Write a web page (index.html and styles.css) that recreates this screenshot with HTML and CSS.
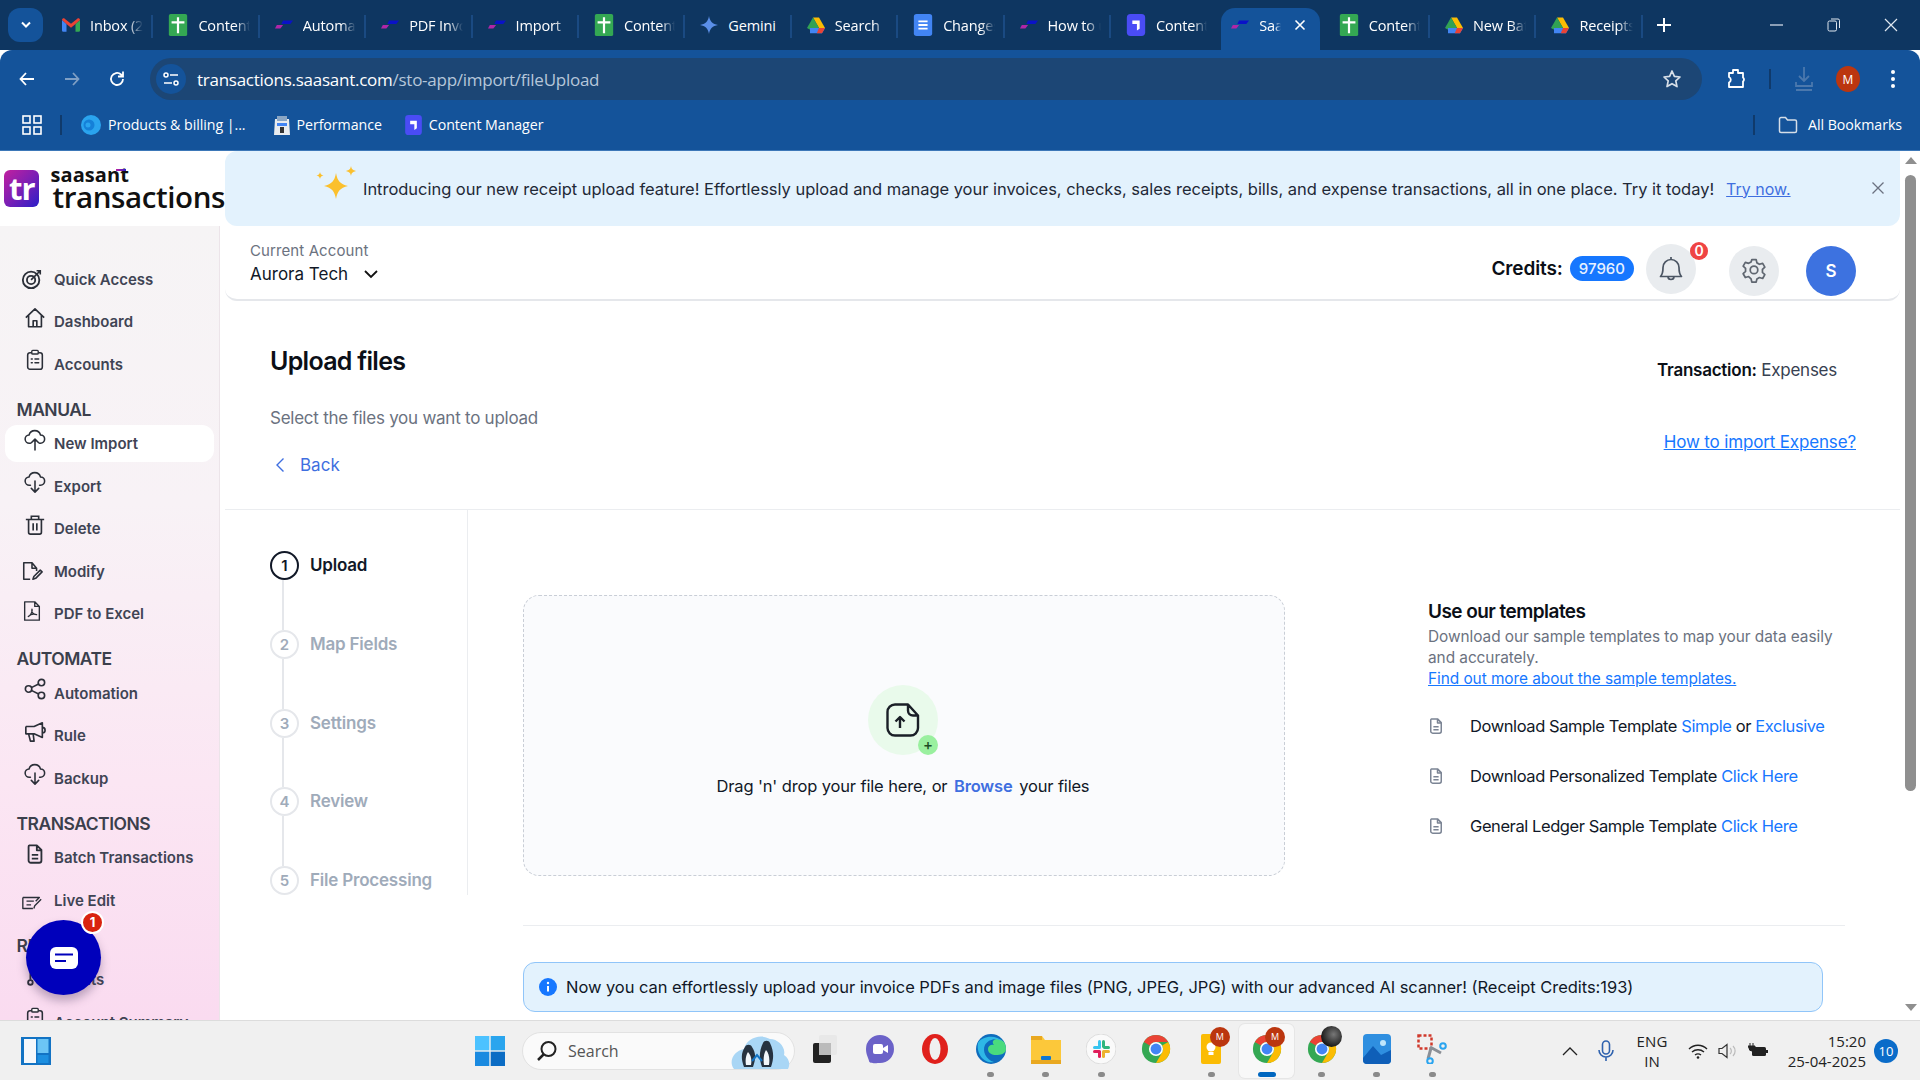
FILE: index.html
```html
<!DOCTYPE html>
<html lang="en">
<head>
<meta charset="utf-8">
<title>SaasAnt Transactions</title>
<link rel="stylesheet" href="styles.css">
</head>
<body>
<svg class="defs" width="0" height="0" aria-hidden="true">
  <defs>
    <symbol id="sheets" viewBox="0 0 20 24"><path d="M2 0h16a2 2 0 0 1 2 2v20a2 2 0 0 1-2 2H2a2 2 0 0 1-2-2V2a2 2 0 0 1 2-2z" fill="#34a853"/><path d="M8.800 3.500h2.400V8H17v2.400h-5.800V21H8.800V10.400H3V8h5.800z" fill="#fff"/></symbol>
    <symbol id="saas" viewBox="0 0 20 12"><path d="M9 1h11l-3 4H7z" fill="#0a12c8"/><path d="M2 6h7l-3 4H0z" fill="#b026a8"/></symbol>
    <symbol id="drive" viewBox="0 0 24 22"><path d="M8 1h8l8 14h-8z" fill="#fbbc04"/><path d="M8 1l8 14-4 6.500L0 15z" fill="#34a853" opacity=".95"/><path d="M4 15h20l-4 7H4z" fill="#4285f4"/><path d="M16 15h8l-4 7h-7z" fill="#ea4335"/></symbol>
    <symbol id="cm" viewBox="0 0 20 24"><rect width="20" height="24" rx="4" fill="#4a4cf5"/><path d="M6 7h8v9l-3 2v-7H6z" fill="#fff"/></symbol>
    <symbol id="chrome" viewBox="0 0 32 32"><circle cx="16" cy="16" r="15" fill="#34a853"/><path d="M16 1a15 15 0 0 1 13 7.500H16a7.500 7.500 0 0 0-6.500 3.750L3 8.500A15 15 0 0 1 16 1z" fill="#ea4335"/><path d="M29 8.500A15 15 0 0 1 16 31l6.500-11.250A7.500 7.500 0 0 0 22.500 12.250z" fill="#fbbc04"/><circle cx="16" cy="16" r="7.500" fill="#fff"/><circle cx="16" cy="16" r="5.800" fill="#4285f4"/></symbol>
    <symbol id="doc" viewBox="0 0 24 24"><path d="M6 2.500h8l5 5V19a2.500 2.500 0 0 1-2.500 2.500h-9A2.500 2.500 0 0 1 5 19V4a1.500 1.500 0 0 1 1-1.500zM14 2.500V8h5M8.500 13h7M8.500 17h7" fill="none" stroke="currentColor" stroke-width="2" stroke-linejoin="round"/></symbol>
    <symbol id="cloud-up" viewBox="0 0 24 24"><path d="M7 15.500H6a4.500 4.500 0 0 1-.5-9A6.500 6.500 0 0 1 18 6.500a4.500 4.500 0 0 1 0 9h-1M12 23V11M8 15l4-4 4 4" fill="none" stroke="currentColor" stroke-width="1.700" stroke-linecap="round" stroke-linejoin="round"/></symbol>
    <symbol id="cloud-down" viewBox="0 0 24 24"><path d="M7 15.500H6a4.500 4.500 0 0 1-.5-9A6.500 6.500 0 0 1 18 6.500a4.500 4.500 0 0 1 0 9h-1M12 11v12M8 19l4 4 4-4" fill="none" stroke="currentColor" stroke-width="1.700" stroke-linecap="round" stroke-linejoin="round"/></symbol>
    <symbol id="clip" viewBox="0 0 24 24"><rect x="4" y="4" width="16" height="18" rx="2.500" fill="none" stroke="currentColor" stroke-width="1.700"/><rect x="8.500" y="1.500" width="7" height="4" rx="1" fill="#f7f4f5" stroke="currentColor" stroke-width="1.500"/><path d="M8 11h1M12 11h4M8 15h1M12 15h4" stroke="currentColor" stroke-width="1.700" stroke-linecap="round"/></symbol>
  </defs>
</svg>

<div class="browser">
  <header class="tabstrip">
    <div class="tablist-btn"><svg width="12" height="8" viewBox="0 0 12 8"><path d="M2 1.500l4 4 4-4" fill="none" stroke="#fff" stroke-width="2"/></svg></div>
    <div class="tabs">
      <div class="tab"><svg class="fav" viewBox="0 0 20 16"><path d="M0 2.500V14a1.500 1.500 0 0 0 1.500 1.500H5V7z" fill="#4285f4"/><path d="M15 7v8.500h3.500A1.500 1.500 0 0 0 20 14V2.500z" fill="#34a853"/><path d="M0 2.500C0 .8 2 0 3 1l7 5.500L17 1c1-1 3-.2 3 1.500L15 7l-5 4-5-4z" fill="#ea4335"/></svg><span class="tab-title">Inbox (2)</span></div>
      <div class="tab"><svg class="fav tall"><use href="#sheets"/></svg><span class="tab-title">Content</span></div>
      <div class="tab"><svg class="fav"><use href="#saas"/></svg><span class="tab-title">Automation</span></div>
      <div class="tab"><svg class="fav"><use href="#saas"/></svg><span class="tab-title">PDF Invoice</span></div>
      <div class="tab"><svg class="fav"><use href="#saas"/></svg><span class="tab-title">Import</span></div>
      <div class="tab"><svg class="fav tall"><use href="#sheets"/></svg><span class="tab-title">Content</span></div>
      <div class="tab"><svg class="fav" viewBox="0 0 20 20"><path d="M10 0c1 6 4 9 10 10-6 1-9 4-10 10-1-6-4-9-10-10 6-1 9-4 10-10z" fill="#5b8fe8"/></svg><span class="tab-title plain">Gemini</span></div>
      <div class="tab"><svg class="fav"><use href="#drive"/></svg><span class="tab-title">Search</span></div>
      <div class="tab"><svg class="fav tall" viewBox="0 0 20 24"><rect width="20" height="24" rx="3" fill="#4285f4"/><path d="M5 8h10M5 12h10M5 16h10" stroke="#fff" stroke-width="2"/></svg><span class="tab-title">Changes</span></div>
      <div class="tab"><svg class="fav"><use href="#saas"/></svg><span class="tab-title">How to use</span></div>
      <div class="tab"><svg class="fav tall"><use href="#cm"/></svg><span class="tab-title">Content</span></div>
      <div class="tab active"><svg class="fav"><use href="#saas"/></svg><span class="tab-title short">SaasAnt</span><svg class="tab-x" width="12" height="12" viewBox="0 0 12 12"><path d="M1.500 1.500l9 9M10.500 1.500l-9 9" stroke="#fff" stroke-width="1.600"/></svg></div>
      <div class="tab"><svg class="fav tall"><use href="#sheets"/></svg><span class="tab-title">Content</span></div>
      <div class="tab"><svg class="fav"><use href="#drive"/></svg><span class="tab-title">New Batch</span></div>
      <div class="tab"><svg class="fav"><use href="#drive"/></svg><span class="tab-title">Receipts</span></div>
    </div>
    <svg class="newtab" width="14" height="14" viewBox="0 0 14 14"><path d="M7 0v14M0 7h14" stroke="#fff" stroke-width="2"/></svg>
    <div class="winctl">
      <svg width="14" height="14" viewBox="0 0 14 14"><path d="M0 7h13" stroke="#dfe7f0" stroke-width="1.200"/></svg>
      <svg width="14" height="14" viewBox="0 0 14 14"><rect x="1" y="3" width="8.500" height="10" rx="1.500" fill="none" stroke="#dfe7f0"/><path d="M4 1h7a1.500 1.500 0 0 1 1.500 1.500V10" fill="none" stroke="#dfe7f0"/></svg>
      <svg width="14" height="14" viewBox="0 0 14 14"><path d="M1 1l12 12M13 1L1 13" stroke="#dfe7f0" stroke-width="1.200"/></svg>
    </div>
  </header>

  <div class="toolbar">
    <div class="nav-btns">
      <svg width="18" height="18" viewBox="0 0 18 18"><path d="M16 9H3M8 3L2.500 9 8 15" fill="none" stroke="#fff" stroke-width="1.800"/></svg>
      <svg width="18" height="18" viewBox="0 0 18 18"><path d="M2 9h13M10 3l5.500 6L10 15" fill="none" stroke="#7f9fc4" stroke-width="1.800"/></svg>
      <svg width="18" height="18" viewBox="0 0 18 18"><path d="M15 9a6 6 0 1 1-2-4.500L15 6.500M15 1.500v5h-5" fill="none" stroke="#fff" stroke-width="1.800"/></svg>
    </div>
    <div class="omnibox">
      <div class="siteinfo"><svg width="16" height="16" viewBox="0 0 16 16"><path d="M7 4h8M1 12h8" stroke="#fff" stroke-width="1.500"/><circle cx="3" cy="4" r="2" fill="none" stroke="#fff" stroke-width="1.500"/><circle cx="13" cy="12" r="2" fill="none" stroke="#fff" stroke-width="1.500"/></svg></div>
      <span class="url">transactions.saasant.com<span class="url-path">/sto-app/import/fileUpload</span></span>
      <svg class="star" width="20" height="20" viewBox="0 0 20 20"><path d="M10 2l2.400 5.400 5.600.6-4.200 3.900 1.200 5.700L10 14.700l-5 2.900 1.200-5.700L2 8l5.600-.6z" fill="none" stroke="#d7dfe8" stroke-width="1.700" stroke-linejoin="round"/></svg>
    </div>
    <div class="tool-right">
      <svg width="20" height="22" viewBox="0 0 20 22"><path d="M3 5h4V2h5v3h5v4.500a2.500 2.500 0 0 1 0 4V19H3v-4.500a3 3 0 0 0 0-5.500z" fill="none" stroke="#fff" stroke-width="1.800" stroke-linejoin="round"/></svg>
      <span class="tool-sep"></span>
      <svg width="20" height="26" viewBox="0 0 20 26"><path d="M10 1v13M5 10l5 5 5-5M2 16v4h16v-4M2 24h16" fill="none" stroke="#4b78ad" stroke-width="1.800"/></svg>
      <span class="avatar-m">M</span>
      <svg width="4" height="18" viewBox="0 0 4 18"><circle cx="2" cy="2" r="2" fill="#fff"/><circle cx="2" cy="9" r="2" fill="#fff"/><circle cx="2" cy="16" r="2" fill="#fff"/></svg>
    </div>
  </div>

  <div class="bookmarks">
    <svg class="apps" width="20" height="20" viewBox="0 0 20 20"><g fill="none" stroke="#fff" stroke-width="1.600"><rect x="1" y="1" width="7" height="7"/><rect x="12" y="1" width="7" height="7"/><rect x="1" y="12" width="7" height="7"/><rect x="12" y="12" width="7" height="7"/></g></svg>
    <span class="bm-sep"></span>
    <div class="bm"><svg width="20" height="20" viewBox="0 0 20 20"><circle cx="10" cy="10" r="10" fill="#2aa4ef"/><circle cx="8" cy="10" r="5.500" fill="#1580d8"/><circle cx="7" cy="10" r="2.500" fill="#2aa4ef"/></svg><span>Products &amp; billing |...</span></div>
    <div class="bm"><svg width="16" height="20" viewBox="0 0 16 20"><path d="M1 4h14l1 16H0z" fill="#e9ecef"/><rect x="3" y="1" width="10" height="5" fill="#8ba6c4"/><path d="M3 8h10v3H3z" fill="#4285f4"/><path d="M6 12h4v6H6z" fill="#333"/></svg><span>Performance</span></div>
    <div class="bm"><svg width="17" height="20"><use href="#cm"/></svg><span>Content Manager</span></div>
    <div class="bm-all">
      <span class="bm-sep"></span>
      <svg width="20" height="18" viewBox="0 0 20 18"><path d="M1.500 3a1.500 1.500 0 0 1 1.500-1.500h4.500l2 2.500H17a1.500 1.500 0 0 1 1.500 1.500V15a1.500 1.500 0 0 1-1.500 1.500H3A1.500 1.500 0 0 1 1.500 15z" fill="none" stroke="#d5dee8" stroke-width="1.500"/></svg>
      <span>All Bookmarks</span>
    </div>
  </div>

  <div class="page">
    <aside class="side">
      <div class="logo">
        <div class="logo-mark">tr</div>
        <div class="logo-text"><span class="logo-top">saasant</span><span class="logo-main">transactions</span></div>
      </div>
      <nav class="nav">
        <a class="nav-item"><svg class="nav-ic flat" viewBox="0 0 24 24"><g fill="none" stroke="currentColor" stroke-width="2"><circle cx="11" cy="13" r="9"/><circle cx="11" cy="13" r="4.500"/><path d="M11 13L21 3M17 3h4v4" stroke-width="1.800"/></g></svg><span>Quick Access</span></a>
        <a class="nav-item"><svg class="nav-ic" viewBox="0 0 24 24"><path d="M2 11.500L12 2l10 9.500M5 9v12.500h14V9M10 21.500V15h4v6.500" fill="none" stroke="currentColor" stroke-width="1.800" stroke-linejoin="round"/></svg><span>Dashboard</span></a>
        <a class="nav-item"><svg class="nav-ic"><use href="#clip"/></svg><span>Accounts</span></a>
        <h3 class="nav-head">MANUAL</h3>
        <a class="nav-item current"><svg class="nav-ic"><use href="#cloud-up"/></svg><span>New Import</span></a>
        <a class="nav-item"><svg class="nav-ic"><use href="#cloud-down"/></svg><span>Export</span></a>
        <a class="nav-item"><svg class="nav-ic" viewBox="0 0 24 24"><path d="M2 6h20M8 6V2.500h8V6M5 6v14a2 2 0 0 0 2 2h10a2 2 0 0 0 2-2V6M10 10v8M14 10v8" fill="none" stroke="currentColor" stroke-width="1.800"/></svg><span>Delete</span></a>
        <a class="nav-item"><svg class="nav-ic flat" viewBox="0 0 24 24"><path d="M10 21H3V3h9l5 6v3M12 3v6h5M13 21l1-3 7-7 2 2-7 7z" fill="none" stroke="currentColor" stroke-width="1.700" stroke-linejoin="round"/></svg><span>Modify</span></a>
        <a class="nav-item"><svg class="nav-ic pdf" viewBox="0 0 24 24"><path d="M4 2h11l5 5v15H4zM15 2v5h5M8 18c2-1 5-5 4-8-1 3 1 6 5 6-3-1-7 0-9 2z" fill="none" stroke="currentColor" stroke-width="1.500" stroke-linejoin="round"/></svg><span>PDF to Excel</span></a>
        <h3 class="nav-head">AUTOMATE</h3>
        <a class="nav-item"><svg class="nav-ic" viewBox="0 0 24 24"><g fill="none" stroke="currentColor" stroke-width="1.800"><circle cx="5" cy="12" r="3.500"/><circle cx="19" cy="5" r="3.500"/><circle cx="19" cy="19" r="3.500"/><path d="M8 10.500l8-4M8 13.500l8 4"/></g></svg><span>Automation</span></a>
        <a class="nav-item"><svg class="nav-ic" viewBox="0 0 24 24"><path d="M2 6h9l9-4v16l-9-4H7M2 6v8h5M5 14l2 8h4l-1-8M20 7a3 3 0 0 1 0 6" fill="none" stroke="currentColor" stroke-width="1.800" stroke-linejoin="round"/></svg><span>Rule</span></a>
        <a class="nav-item"><svg class="nav-ic"><use href="#cloud-down"/></svg><span>Backup</span></a>
        <h3 class="nav-head">TRANSACTIONS</h3>
        <a class="nav-item"><svg class="nav-ic"><use href="#doc"/></svg><span>Batch Transactions</span></a>
        <a class="nav-item"><svg class="nav-ic low" viewBox="0 0 24 24"><path d="M2 6h18l-4 4M2 6v12h11M6 10h8M6 14h5M14 18l1-3 7-7" fill="none" stroke="currentColor" stroke-width="1.500" stroke-linejoin="round"/></svg><span>Live Edit</span></a>
        <h3 class="nav-head">REPORTS</h3>
        <a class="nav-item"><svg class="nav-ic" viewBox="0 0 24 24"><path d="M7 2v14M17 2v6" fill="none" stroke="currentColor" stroke-width="2"/><circle cx="7" cy="19" r="2.500" fill="none" stroke="currentColor" stroke-width="2"/></svg><span>Clients</span></a>
        <a class="nav-item"><svg class="nav-ic"><use href="#clip"/></svg><span>Account Summary</span></a>
      </nav>
      <div class="chat">
        <svg width="28" height="22" viewBox="0 0 28 22"><rect width="28" height="22" rx="6" fill="#fff"/><path d="M5 7.500h18M5 14h11" stroke="#0000bb" stroke-width="2.200"/></svg>
        <span class="chat-badge">1</span>
      </div>
    </aside>

    <main class="main">
      <div class="banner">
        <svg class="sparkle" width="44" height="42" viewBox="0 0 44 42"><path d="M21 8c1.500 8 4 11 12 13-8 2-10.500 5-12 13-1.500-8-4-11-12-13 8-2 10.500-5 12-13z" fill="#fbc02d"/><path d="M36 1c.600 3 1.500 4 5 5-3.500 1-4.400 2-5 5-.600-3-1.500-4-5-5 3.500-1 4.400-2 5-5zM5 7c.400 2 1 3 3.500 3.500C6 11 5.400 12 5 14c-.400-2-1-3-3.500-3.500C4 10 4.600 9 5 7z" fill="#fbc02d"/></svg>
        <p class="banner-text">Introducing our new receipt upload feature! Effortlessly upload and manage your invoices, checks, sales receipts, bills, and expense transactions, all in one place. Try it today!</p>
        <a class="banner-link">Try now.</a>
        <svg class="banner-x" width="12" height="12" viewBox="0 0 12 12"><path d="M.5.500l11 11M11.500.500l-11 11" stroke="#6b7280" stroke-width="1.300"/></svg>
      </div>

      <div class="topbar">
        <div class="account">
          <span class="account-label">Current Account</span>
          <span class="account-name">Aurora Tech <svg width="14" height="9" viewBox="0 0 14 9"><path d="M1 1l6 6 6-6" fill="none" stroke="#111" stroke-width="1.800"/></svg></span>
        </div>
        <div class="top-right">
          <strong class="credits">Credits:</strong>
          <span class="credit-pill">97960</span>
          <div class="round bell">
            <svg width="24" height="26" viewBox="0 0 24 26"><path d="M1.500 20.500c2-2 2.500-4 2.500-9a8 8 0 0 1 16 0c0 5 .500 7 2.500 9zM12 1v2.500M9 20.500a3 3 0 0 0 6 0" fill="none" stroke="#4b5563" stroke-width="1.700" stroke-linejoin="round"/></svg>
            <span class="bell-badge">0</span>
          </div>
          <div class="round gear">
            <svg width="26" height="26" viewBox="0 0 24 24"><path d="M10 1.500h4l.700 3 2.300 1.300 3-.900 2 3.500-2.200 2.100v2.800l2.200 2.100-2 3.500-3-.900-2.300 1.300-.700 3h-4l-.700-3L7 17.100l-3 .900-2-3.500 2.200-2.100V9.600L2 7.500 4 4l3 .900 2.300-1.300z" fill="none" stroke="#5f6670" stroke-width="1.600" stroke-linejoin="round"/><circle cx="12" cy="11" r="3.500" fill="none" stroke="#5f6670" stroke-width="1.600"/></svg>
          </div>
          <div class="round user">S</div>
        </div>
      </div>

      <section class="title-row">
        <div>
          <h1 class="title">Upload files</h1>
          <p class="subtitle">Select the files you want to upload</p>
          <a class="back"><svg width="10" height="16" viewBox="0 0 10 16"><path d="M8.500 1.500L2 8l6.500 6.500" fill="none" stroke="#3f6fe0" stroke-width="1.400"/></svg><span>Back</span></a>
        </div>
        <div class="title-right">
          <p class="txn"><b>Transaction:</b> Expenses</p>
          <a class="howto">How to import Expense?</a>
        </div>
      </section>

      <section class="work">
        <ol class="steps">
          <li class="step on"><div class="marker"><span class="num">1</span><span class="rail"></span></div><span class="step-name">Upload</span></li>
          <li class="step"><div class="marker"><span class="num">2</span><span class="rail"></span></div><span class="step-name">Map Fields</span></li>
          <li class="step"><div class="marker"><span class="num">3</span><span class="rail"></span></div><span class="step-name">Settings</span></li>
          <li class="step"><div class="marker"><span class="num">4</span><span class="rail"></span></div><span class="step-name">Review</span></li>
          <li class="step last"><div class="marker"><span class="num">5</span></div><span class="step-name">File Processing</span></li>
        </ol>
        <div class="work-main">
          <div class="work-row">
            <div class="drop">
              <div class="drop-icon">
                <svg width="36" height="36" viewBox="0 0 36 36"><path d="M10 2.500h13l10 11V26a7.500 7.500 0 0 1-7.500 7.500H10A7.500 7.500 0 0 1 2.500 26V10A7.500 7.500 0 0 1 10 2.500zM23 2.500V8.500a5 5 0 0 0 5 5h5M15 26V15M10.500 19.500L15 15l4.500 4.500" fill="none" stroke="#1a1f27" stroke-width="2.400" stroke-linejoin="round"/></svg>
                <span class="drop-plus">+</span>
              </div>
              <p class="drop-text">Drag 'n' drop your file here, or <b>Browse</b> your files</p>
            </div>
            <div class="tpl">
              <h2 class="tpl-title">Use our templates</h2>
              <p class="tpl-desc">Download our sample templates to map your data easily and accurately.<br><a>Find out more about the sample templates.</a></p>
              <ul class="tpl-list">
                <li><svg class="tpl-ic"><use href="#doc"/></svg><span>Download Sample Template <a>Simple</a> or <a>Exclusive</a></span></li>
                <li><svg class="tpl-ic"><use href="#doc"/></svg><span>Download Personalized Template <a>Click Here</a></span></li>
                <li><svg class="tpl-ic"><use href="#doc"/></svg><span>General Ledger Sample Template <a>Click Here</a></span></li>
              </ul>
            </div>
          </div>
          <hr class="rule">
          <div class="notice">
            <svg width="18" height="18" viewBox="0 0 18 18"><circle cx="9" cy="9" r="9" fill="#1677ff"/><path d="M9 8v5.500" stroke="#fff" stroke-width="2"/><circle cx="9" cy="5" r="1.200" fill="#fff"/></svg>
            <span>Now you can effortlessly upload your invoice PDFs and image files (PNG, JPEG, JPG) with our advanced AI scanner! (Receipt Credits:193)</span>
          </div>
        </div>
      </section>
    </main>

    <div class="scrollbar">
      <span class="sb-up"></span>
      <span class="sb-thumb"></span>
      <span class="sb-down"></span>
    </div>
  </div>

  <footer class="taskbar">
    <svg class="widgets" width="30" height="28" viewBox="0 0 30 28"><rect width="30" height="28" fill="#1273c4"/><rect x="3" y="2" width="12" height="24" fill="#f5f8fb"/><rect x="16.500" y="2" width="11" height="14" fill="#6cc5f5"/><rect x="16.500" y="18" width="11" height="8" fill="#1c8fe0"/></svg>
    <div class="tb-center">
      <svg class="winlogo" width="30" height="30" viewBox="0 0 30 30"><rect width="14.300" height="14.300" fill="#4cc2ff"/><rect x="15.700" width="14.300" height="14.300" fill="#2aa5ee"/><rect y="15.700" width="14.300" height="14.300" fill="#1a8ae0"/><rect x="15.700" y="15.700" width="14.300" height="14.300" fill="#0b6cc4"/></svg>
      <div class="search">
        <svg width="22" height="22" viewBox="0 0 22 22"><circle cx="12.500" cy="9" r="7" fill="none" stroke="#222" stroke-width="2"/><path d="M8 14l-6 6" stroke="#222" stroke-width="2.500"/></svg>
        <span>Search</span>
        <svg class="penguins" width="60" height="36" viewBox="0 0 60 36"><path d="M4 36c-6-8 0-18 10-20C16 6 30 0 40 6c8 0 16 8 14 16 6 4 6 10 4 14z" fill="#a9d6f5"/><path d="M14 34c-3-8-3-14 1-20 1-3 6-3 7 0 4 6 4 12 1 20z" fill="#263240"/><path d="M32 34c-3-8-3-16 1-24 1-3 6-3 7 0 4 8 4 16 1 24z" fill="#263240"/><path d="M16 32c-1-5 0-10 2-13 3 3 4 8 3 13zM34 32c-1-6 0-12 2-15 3 3 4 9 3 15z" fill="#f2f6fa"/><path d="M22 28l5-6 5 6" fill="none" stroke="#1273c4" stroke-width="2"/></svg>
      </div>
      <div class="apps-row">
        <div class="app"><svg width="24" height="28" viewBox="0 0 24 28"><rect x="6" y="0" width="18" height="20" rx="2" fill="#e8e8e8"/><rect y="8" width="18" height="20" rx="2" fill="#222"/><rect x="6" y="8" width="12" height="12" fill="#bbb"/></svg></div>
        <div class="app"><svg width="30" height="30" viewBox="0 0 30 30"><path d="M15 1a14 14 0 0 1 0 28c-3 0-11 1-11-2 0-2-3-6-3-12A14 14 0 0 1 15 1z" fill="#6b62c8"/><rect x="8" y="10" width="10" height="10" rx="2" fill="#fff"/><path d="M18 14l5-3v8l-5-3z" fill="#fff"/></svg></div>
        <div class="app"><svg width="30" height="32" viewBox="0 0 30 32"><ellipse cx="15" cy="16" rx="13" ry="15" fill="#e0201c"/><ellipse cx="15" cy="16" rx="5.500" ry="11" fill="#f0f0f0"/></svg></div>
        <div class="app dot"><svg width="30" height="30" viewBox="0 0 30 30"><circle cx="15" cy="15" r="15" fill="#0f6cbd"/><path d="M30 15c0 5-6 6-10 6s-8-2-8-6c0-3 3-5 6-4-6-7 12-10 12 4z" fill="#4adb7d"/><path d="M2 9C6 2 20 0 27 8c-6-5-15-3-18 3-3 6 1 15 9 17-9 2-18-7-16-19z" fill="#2eb8e6"/></svg></div>
        <div class="app dot"><svg width="32" height="32" viewBox="0 0 32 32"><path d="M1 3h11l3 4h16v24H1z" fill="#fcc83a"/><rect x="1" y="3" width="11" height="4" fill="#e9a820"/><rect x="11" y="23" width="10" height="4" rx="1" fill="#0f78d4"/><rect x="1" y="27" width="30" height="4" fill="#e9a820"/></svg></div>
        <div class="app dot"><svg width="30" height="30" viewBox="0 0 30 30"><circle cx="15" cy="15" r="15" fill="#fafafa" stroke="#ddd"/><rect x="12" y="6" width="3" height="8" rx="1.500" fill="#36c5f0"/><rect x="7" y="12" width="8" height="3" rx="1.500" fill="#36c5f0"/><rect x="16" y="6" width="3" height="8" rx="1.500" fill="#2eb67d"/><rect x="17" y="12" width="7" height="3" rx="1.500" fill="#2eb67d"/><rect x="7" y="16" width="8" height="3" rx="1.500" fill="#e01e5a"/><rect x="12" y="17" width="3" height="7" rx="1.500" fill="#e01e5a"/><rect x="16" y="16" width="3" height="8" rx="1.500" fill="#ecb22e"/><rect x="17" y="16" width="7" height="3" rx="1.500" fill="#ecb22e"/></svg></div>
        <div class="app"><svg width="30" height="30"><use href="#chrome"/></svg></div>
        <div class="app dot"><svg width="20" height="30" viewBox="0 0 20 30"><rect width="20" height="30" rx="2" fill="#fbbc04"/><circle cx="10" cy="13" r="4.500" fill="#fff"/><rect x="7.500" y="18" width="5" height="3" fill="#fff"/></svg><span class="m-badge">M</span></div>
        <div class="app dot active"><svg width="30" height="30"><use href="#chrome"/></svg><span class="m-badge">M</span></div>
        <div class="app dot"><svg width="30" height="30"><use href="#chrome"/></svg><span class="photo-badge"></span></div>
        <div class="app dot"><svg width="28" height="30" viewBox="0 0 28 30"><rect width="28" height="30" rx="4" fill="#2f8fe0"/><circle cx="20" cy="9" r="3" fill="#bfe6fb"/><path d="M0 24l10-12 8 9 10-5v10a4 4 0 0 1-4 4H4a4 4 0 0 1-4-4z" fill="#0f5fb8"/></svg></div>
        <div class="app dot"><svg width="30" height="30" viewBox="0 0 30 30"><rect x="1.500" y="1.500" width="13" height="13" fill="none" stroke="#d0392b" stroke-width="2.500" stroke-dasharray="3 2"/><path d="M13 13l11 6M14 14l-3 11" stroke="#8a8f96" stroke-width="3"/><circle cx="26" cy="12" r="2.800" fill="none" stroke="#2aa4ef" stroke-width="2"/><circle cx="13" cy="27" r="2.800" fill="none" stroke="#2aa4ef" stroke-width="2"/></svg></div>
      </div>
    </div>
    <div class="tray">
      <svg width="16" height="10" viewBox="0 0 16 10"><path d="M1 9l7-7 7 7" fill="none" stroke="#222" stroke-width="1.300"/></svg>
      <svg width="16" height="22" viewBox="0 0 16 22"><rect x="4.500" y="1" width="7" height="13" rx="3.500" fill="none" stroke="#2f62ae" stroke-width="1.600"/><path d="M1 10a7 7 0 0 0 14 0M8 17v4" fill="none" stroke="#2f62ae" stroke-width="1.600"/></svg>
      <div class="lang"><span>ENG</span><span>IN</span></div>
      <svg width="20" height="16" viewBox="0 0 20 16"><path d="M1 6c5-5 13-5 18 0M4 9c3.500-3 8.500-3 12 0M7 12c2-1.500 4-1.500 6 0" fill="none" stroke="#222" stroke-width="1.400"/><circle cx="10" cy="14.500" r="1.300" fill="#222"/></svg>
      <svg width="20" height="16" viewBox="0 0 20 16"><path d="M1 5.500h3L9 1.500v13L4 10.500H1z" fill="none" stroke="#333" stroke-width="1.200"/><path d="M12 5a4 4 0 0 1 0 6M15 3a7 7 0 0 1 0 10" fill="none" stroke="#bbb" stroke-width="1.200"/></svg>
      <svg width="20" height="16" viewBox="0 0 20 16"><rect x="4" y="4" width="14" height="9" rx="1.500" fill="#222"/><rect x="18" y="7" width="2" height="3" fill="#222"/><path d="M2 0v3M5 0v3M0 3h7v2a3 3 0 0 1-6 0z" stroke="#222" fill="#222"/></svg>
      <div class="clock"><span>15:20</span><span>25-04-2025</span></div>
      <span class="notif">10</span>
    </div>
  </footer>
</div>
</body>
</html>
```

FILE: styles.css
```css
* { box-sizing: border-box; }
html, body { margin: 0; height: 100%; overflow: hidden; }
body { font-family: Inter, "Liberation Sans", sans-serif; color: #111827; }
p, h1, h2, h3, ul, ol { margin: 0; padding: 0; list-style: none; }
.defs { display: block; height: 0; }
.browser { width: 1920px; height: 1080px; display: flex; flex-direction: column; }

/* Tab strip */
.tabstrip { height: 50px; background: #0e3661; display: flex; align-items: flex-start; padding: 8px 0 0 8px; flex: none; font-family: "Open Sans", sans-serif; }
.tablist-btn { width: 35px; height: 34px; background: #14539a; border-radius: 12px; display: flex; align-items: center; justify-content: center; margin-right: 4px; }
.tabs { display: flex; }
.tab { width: 106.400px; height: 42px; display: flex; align-items: center; padding: 0 10px 8px 15px; gap: 10px; color: #fff; font-size: 14.500px; letter-spacing: -.15px; position: relative; }
.tab::after { content: ""; position: absolute; right: 0; top: 7px; height: 23px; width: 2px; background: #1a4a82; }
.tab.active { background: #14539a; border-radius: 14px 14px 0 0; margin: 0 4px; width: 98.400px; padding: 0 10px 8px 10px; }
.tab.active::after, .tab:nth-child(11)::after { display: none; }
.fav { width: 18px; height: 18px; flex: none; }
.fav.tall { width: 20px; height: 22px; }
.tab-title { flex: 1; min-width: 0; overflow: hidden; white-space: nowrap; -webkit-mask-image: linear-gradient(90deg, #000 72%, transparent); mask-image: linear-gradient(90deg, #000 72%, transparent); }
.tab-title.plain { -webkit-mask-image: none; mask-image: none; }
.tab-title.short { flex: none; width: 22px; }
.tab-x { margin-left: auto; margin-right: 4px; flex: none; }
.newtab { margin: 10px 0 0 14px; flex: none; }
.winctl { margin-left: auto; display: flex; gap: 43px; padding: 10px 22px 0 0; }

/* Toolbar */
.toolbar { height: 50px; background: #14539a; border-radius: 12px 12px 0 0; display: flex; align-items: center; flex: none; padding: 8px 0 0 18px; }
.nav-btns { display: flex; gap: 27px; width: 132px; }
.omnibox { width: 1552px; height: 42px; background: #1c4675; border-radius: 21px; display: flex; align-items: center; padding: 0 20px 0 6px; }
.siteinfo { width: 30px; height: 30px; background: #14539a; border-radius: 50%; display: flex; align-items: center; justify-content: center; }
.url { margin-left: 11px; color: #fff; font-family: "Open Sans", sans-serif; font-size: 17px; letter-spacing: -.26px; }
.url-path { color: #b6c6da; }
.star { margin-left: auto; }
.tool-right { display: flex; align-items: center; margin-left: 24px; flex: 1; }
.tool-sep { width: 2px; height: 20px; background: #103a6b; margin: 0 23px; }
.avatar-m { width: 24px; height: 26px; background: #bb360f; color: #fff; border-radius: 50%; font: 12px "Open Sans", sans-serif; display: flex; align-items: center; justify-content: center; margin: 0 31px 0 22px; }

/* Bookmarks */
.bookmarks { height: 51px; background: #14539a; display: flex; align-items: center; padding: 0 18px 1px 22px; flex: none; color: #fff; font: 14.200px "Open Sans", sans-serif; letter-spacing: -.05px; border-bottom: 1px solid #3d78b8; }
.apps { flex: none; }
.bm-sep { width: 2px; height: 20px; background: #103a6b; margin: 0 19px 0 18px; flex: none; }
.bm { display: flex; align-items: center; gap: 7px; margin-right: 28px; white-space: nowrap; }
.bm + .bm { margin-right: 23px; }
.bm-all { margin-left: auto; display: flex; align-items: center; gap: 10px; }
.bm-all .bm-sep { margin: 0 13px 0 0; }

/* Page */
.page { height: 869px; display: flex; flex: none; background: #fff; overflow: hidden; }
.side { width: 225px; flex: none; display: flex; flex-direction: column; position: relative; background: #fff; }
.logo { height: 75px; display: flex; align-items: center; padding: 0 0 0 4px; gap: 11px; flex: none; }
.logo-mark { width: 39px; height: 37px; border-radius: 6px; background: linear-gradient(135deg, #c2209f 0%, #7d1fb4 50%, #2a1ec8 100%); color: #fff; font: 700 31px/36px "Open Sans", sans-serif; text-align: center; letter-spacing: -1px; }
.logo-text { display: flex; flex-direction: column; }
.logo-top { font: 700 20px/16px "Open Sans", sans-serif; color: #111; letter-spacing: .1px; position: relative; }
.logo-top::after { content: ""; position: absolute; left: 66px; top: 2px; width: 10px; height: 1.500px; background: linear-gradient(90deg, #c2209f, #2a1ec8); }
.logo-main { font: 600 29.500px/27px "Open Sans", sans-serif; color: #111; letter-spacing: -.4px; margin-left: 2px; white-space: nowrap; }
.nav { width: 220px; flex: 1; background: linear-gradient(180deg, #f6f4f5 0%, #f8f2f6 35%, #fbe6f3 70%, #fadbf0 100%); border-right: 1px solid #ece4e9; padding-top: 32px; overflow: hidden; }
.nav-item { height: 42.500px; display: flex; align-items: center; gap: 8px; color: #3f4454; font-size: 15px; font-weight: 600; white-space: nowrap; margin-left: 5px; margin-right: 5px; padding-left: 19px; border-radius: 12px; }
.nav-item.current { background: #fff; height: 37px; margin-top: 2.750px; margin-bottom: 2.750px; }
.nav-ic { width: 22px; height: 22px; flex: none; color: #2b2f38; margin-bottom: 8px; }
.nav-ic.flat { margin-bottom: 0; margin-left: -3px; margin-right: 3px; }
.nav-ic.pdf { margin-bottom: 5px; margin-left: -3px; margin-right: 3px; }
.nav-ic.low { margin: 6px 3px 0 -3px; }
.nav-head { height: 28px; margin: 9px 0 0 16.500px; font-size: 17.500px; line-height: 29px; font-weight: 600; color: #3b3f4c; letter-spacing: -.5px; }
.chat { position: absolute; left: 26px; top: 769px; width: 75px; height: 75px; background: #0000bb; border-radius: 50%; box-shadow: 0 6px 10px rgba(70, 50, 90, .35); display: flex; align-items: center; justify-content: center; }
.chat-badge { position: absolute; right: -3px; top: -9px; width: 23px; height: 23px; border-radius: 50%; background: #d9230f; border: 2px solid #fff; color: #fff; font: 700 13px/19px Inter, sans-serif; text-align: center; }

.main { flex: 1; min-width: 0; display: flex; flex-direction: column; }
.banner { height: 75px; background: #e3f2fd; border-radius: 12px 0 12px 12px; display: flex; align-items: center; padding: 0 16px 0 90px; flex: none; }
.sparkle { flex: none; margin: -6px 4px 0 0; }
.banner-text { font-size: 16.500px; color: #1f2937; white-space: nowrap; letter-spacing: -.03px; }
.banner-link { margin-left: 12px; font-size: 16px; color: #3f6fe0; text-decoration: underline; white-space: nowrap; }
.banner-x { margin-left: auto; margin-bottom: 2px; }

.topbar { height: 75px; display: flex; justify-content: space-between; align-items: center; padding: 0 44px 0 25px; border-bottom: 2px solid #e5e7eb; border-radius: 0 0 12px 12px; flex: none; }
.account { display: flex; flex-direction: column; gap: 1px; margin-top: 2px; }
.account-label { font-size: 15px; color: #6b7280; line-height: 20px; letter-spacing: .1px; }
.account-name { font-size: 17px; color: #111827; line-height: 24px; display: flex; align-items: center; gap: 16px; white-space: nowrap; }
.top-right { display: flex; align-items: center; margin-top: 16px; }
.credits { font-size: 19px; font-weight: 600; color: #0b0f17; margin-right: 7px; margin-bottom: 5px; letter-spacing: -.1px; }
.credit-pill { background: #1677ff; color: #e8f2ff; font-size: 15px; font-weight: 500; height: 25px; line-height: 25px; padding: 0 9px; border-radius: 13px; margin-bottom: 5px; }
.round { width: 50px; height: 50px; border-radius: 50%; display: flex; align-items: center; justify-content: center; position: relative; }
.bell { background: #e9ecef; margin-left: 12px; margin-bottom: 4px; }
.bell-badge { position: absolute; right: -12px; top: -2px; width: 18px; height: 18px; background: #ef4444; color: #fff; border-radius: 50%; font: 600 14px/18px Inter, sans-serif; text-align: center; }
.gear { background: #e9ecef; margin-left: 33px; }
.user { background: #3d72e0; color: #fff; font-size: 17px; font-weight: 600; margin-left: 27px; }

.title-row { height: 209px; border-bottom: 1px solid #ebedf0; display: flex; justify-content: space-between; padding: 44px 44px 0 45px; flex: none; }
.title { font-size: 25px; line-height: 32px; font-weight: 600; color: #0b0f17; letter-spacing: -.7px; }
.subtitle { margin-top: 29px; font-size: 17px; line-height: 24px; color: #6b7280; letter-spacing: -.25px; }
.back { margin: 23px 0 0 5px; display: flex; align-items: center; gap: 15px; font-size: 17px; line-height: 24px; color: #3f6fe0; }
.title-right { display: flex; flex-direction: column; align-items: flex-end; }
.txn { font-size: 17px; line-height: 24px; margin: 13px 19px 0 0; color: #374151; letter-spacing: -.25px; }
.txn b { font-weight: 600; color: #0b0f17; }
.howto { margin-top: 48px; font-size: 17px; line-height: 24px; color: #1677ff; text-decoration: underline; letter-spacing: -.15px; }

.work { display: flex; flex: 1; min-height: 0; }
.steps { width: 243px; height: 385px; border-right: 1px solid #ebedf0; padding: 41px 0 0 45px; flex: none; }
.step { height: 78.750px; display: flex; gap: 11px; font-size: 17px; font-weight: 600; color: #9fabba; }
.step.last { height: 29px; }
.marker { width: 29px; display: flex; flex-direction: column; }
.num { width: 29px; height: 29px; border: 2px solid #e5e7eb; border-radius: 50%; display: flex; align-items: center; justify-content: center; font-size: 15px; flex: none; }
.rail { width: 2px; flex: 1; background: #e5e7eb; margin-left: 12px; }
.step-name { line-height: 28px; letter-spacing: -.2px; white-space: nowrap; }
.step.on { color: #111827; }
.step.on .num { border-color: #111827; }

.work-main { padding: 85px 0 0 55px; flex: 1; min-width: 0; }
.work-row { display: flex; }
.drop { width: 762px; height: 281px; border: 1px dashed #c9ced6; border-radius: 16px; background: #fafbfd; display: flex; flex-direction: column; align-items: center; padding: 89px 2px 0 0; }
.drop-icon { width: 70px; height: 70px; border-radius: 50%; background: #e9faeb; position: relative; display: flex; align-items: center; justify-content: center; }
.drop-plus { position: absolute; right: 0; bottom: 0; width: 20px; height: 20px; border-radius: 50%; background: #9af09f; font: 500 15px/20px Inter, sans-serif; text-align: center; color: #1d4d25; }
.drop-text { margin-top: 19px; font-size: 16.500px; line-height: 24px; color: #111827; letter-spacing: -.2px; word-spacing: .3px; }
.drop-text b { color: #3f6fe0; font-weight: 600; margin: 0 2px; }
.tpl { margin-left: 143px; width: 420px; padding-top: 4px; }
.tpl-title { font-size: 19px; line-height: 26px; font-weight: 600; color: #0b0f17; letter-spacing: -.55px; }
.tpl-desc { font-size: 15.400px; line-height: 21px; color: #6b7280; width: 410px; margin-top: 1px; letter-spacing: -.05px; }
.tpl-desc a { color: #1677ff; text-decoration: underline; }
.tpl-list { margin-top: 11.500px; }
.tpl-list li { height: 50px; display: flex; align-items: center; font-size: 16.500px; color: #111827; letter-spacing: -.42px; white-space: nowrap; }
.tpl-list a { color: #1677ff; }
.tpl-ic { width: 18px; height: 20px; color: #7b8494; margin: 0 25px 0 -1px; flex: none; }
.rule { border: 0; border-top: 1px solid #ebedf0; margin: 49px 55px 0 0; }
.notice { width: 1300px; height: 50px; margin-top: 36px; background: #e3f2fd; border: 1px solid #90c5f9; border-radius: 12px; display: flex; align-items: center; gap: 9px; padding: 0 0 0 15px; font-size: 16.500px; color: #111827; letter-spacing: -.05px; white-space: nowrap; }

.scrollbar { width: 20px; flex: none; background: #fff; display: flex; flex-direction: column; align-items: flex-start; padding: 6px 0 0 5px; }
.sb-up { width: 0; height: 0; border-left: 6px solid transparent; border-right: 6px solid transparent; border-bottom: 7px solid #8f8f8f; }
.sb-thumb { width: 11px; height: 616px; background: #8f8f8f; border-radius: 6px; margin-top: 11px; }
.sb-down { width: 0; height: 0; border-left: 6px solid transparent; border-right: 6px solid transparent; border-top: 7px solid #8f8f8f; margin-top: 213px; }

/* Taskbar */
.taskbar { height: 60px; background: #f0f0f0; border-top: 1px solid #dcdcdc; display: flex; align-items: center; flex: none; padding-left: 21px; font-family: "Open Sans", sans-serif; }
.widgets { flex: none; }
.tb-center { display: flex; align-items: center; margin-left: 424px; }
.winlogo { flex: none; }
.search { width: 273px; height: 38px; margin-left: 17px; background: #fafafa; border: 1px solid #e2e2e2; border-radius: 19px; display: flex; align-items: center; padding: 0 4px 0 13px; gap: 10px; font-size: 16px; color: #555; }
.penguins { margin-left: auto; }
.apps-row { display: flex; align-items: center; margin-left: 2.500px; }
.app { width: 55.200px; height: 54px; display: flex; align-items: center; justify-content: center; position: relative; border-radius: 6px; padding-bottom: 3px; }
.app.dot::after { content: ""; position: absolute; bottom: 1px; width: 7px; height: 5px; border-radius: 3px; background: #8a8a8a; }
.app.active { background: #f8f8f8; box-shadow: 0 0 0 1px #e6e6e6; }
.app.active::after { width: 18px; background: #0067c0; }
.m-badge { position: absolute; left: 26px; top: 3px; width: 20px; height: 20px; background: #bb360f; color: #fff; border-radius: 50%; font-size: 9px; line-height: 20px; text-align: center; }
.photo-badge { position: absolute; left: 27px; top: 2px; width: 21px; height: 21px; border-radius: 50%; background: radial-gradient(circle at 60% 40%, #777, #1a1a1a 70%); }
.tray { margin-left: auto; display: flex; align-items: center; color: #222; font-size: 15px; padding-right: 22px; }
.tray > svg:nth-child(1) { margin-right: 20px; }
.lang { display: flex; flex-direction: column; align-items: center; line-height: 20px; margin: 0 20.500px 0 22.500px; letter-spacing: .2px; }
.tray > svg:nth-child(4), .tray > svg:nth-child(5) { margin-right: 10px; }
.clock { display: flex; flex-direction: column; align-items: flex-end; line-height: 20px; margin-left: 19.500px; }
.notif { width: 24px; height: 24px; border-radius: 50%; background: #0a6cc9; color: #fff; font-size: 13px; line-height: 24px; text-align: center; margin-left: 8px; }
```
